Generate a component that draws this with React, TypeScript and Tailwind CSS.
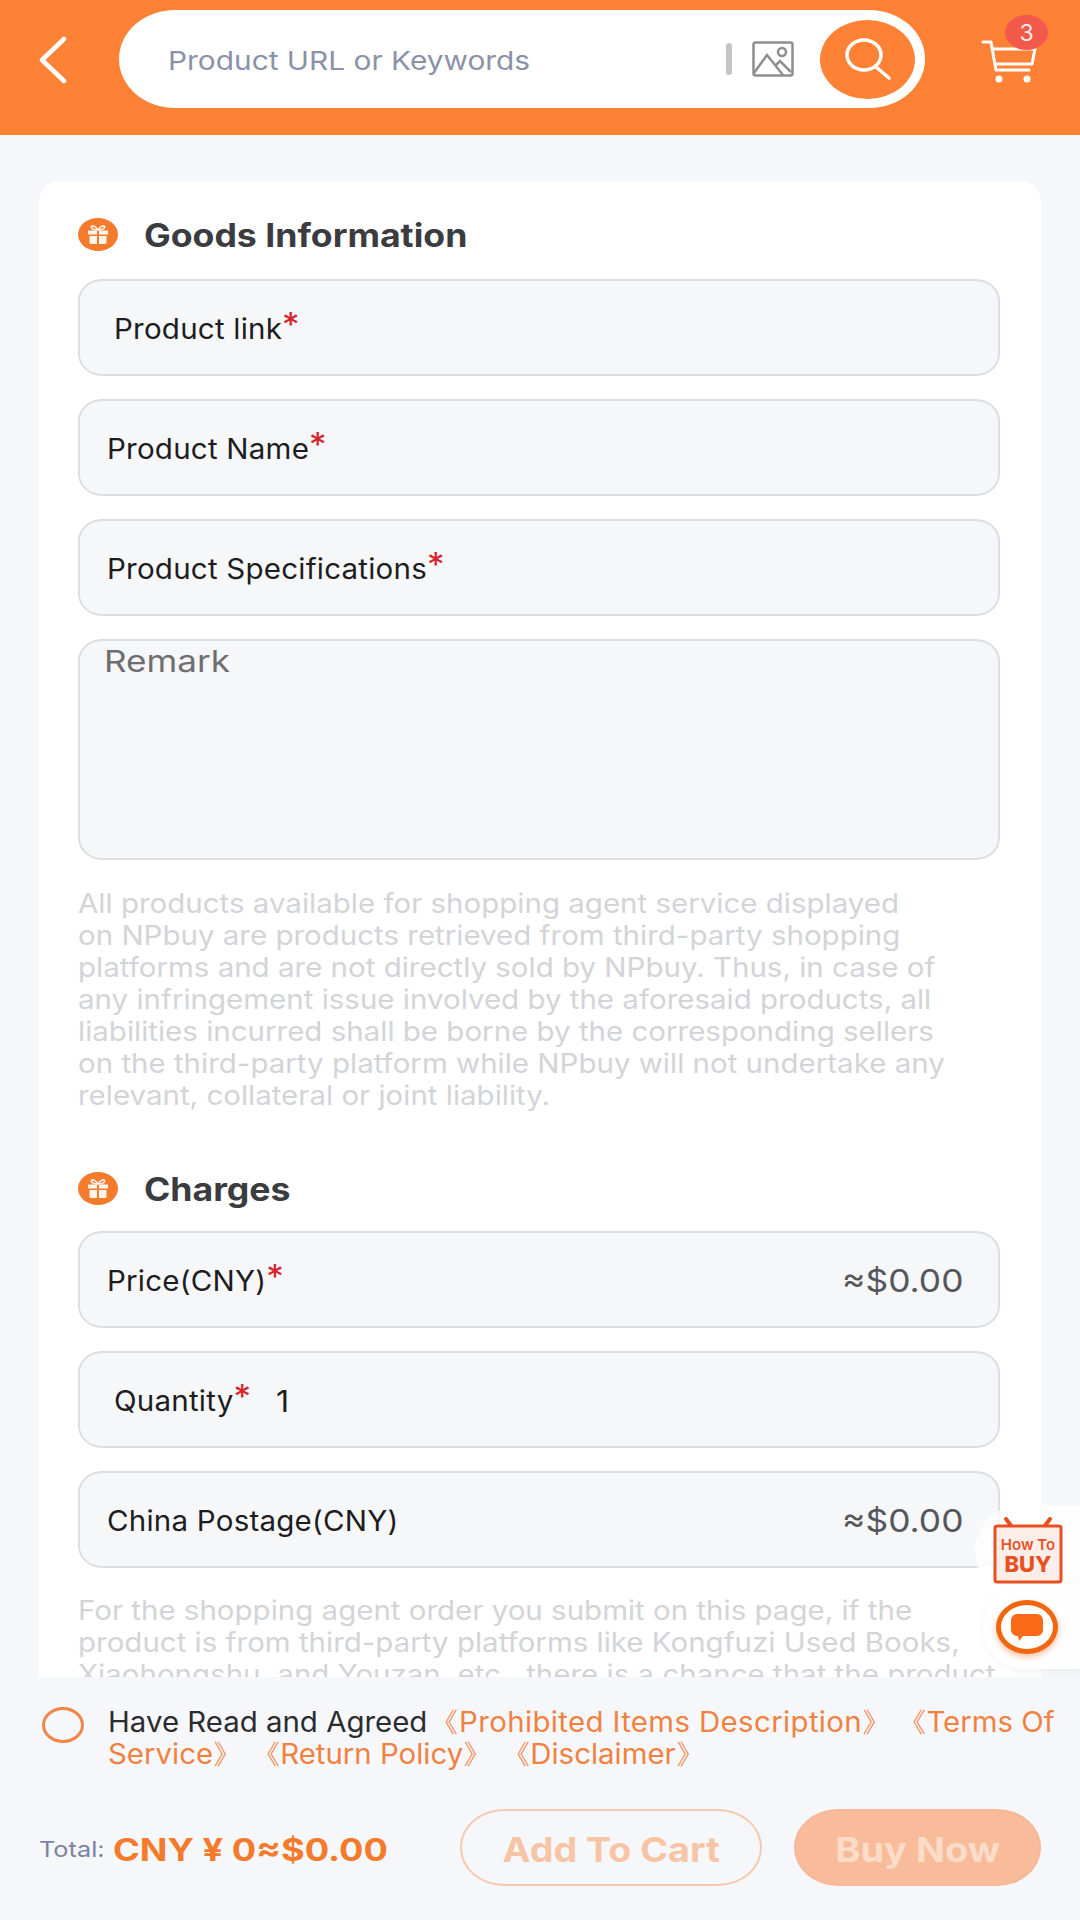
import React from 'react';

const FONT = 'font-["Inter","Noto_Sans",sans-serif]';

const GOODS_NOTE = [
  'All products available for shopping agent service displayed',
  'on NPbuy are products retrieved from third-party shopping',
  'platforms and are not directly sold by NPbuy. Thus, in case of',
  'any infringement issue involved by the aforesaid products, all',
  'liabilities incurred shall be borne by the corresponding sellers',
  'on the third-party platform while NPbuy will not undertake any',
  'relevant, collateral or joint liability.',
];

const CHARGES_NOTE = [
  'For the shopping agent order you submit on this page, if the',
  'product is from third-party platforms like Kongfuzi Used Books,',
  'Xiaohongshu, and Youzan, etc., there is a chance that the product',
  'may not be purchased.',
];

function GiftBadge() {
  return (
    <span className="flex h-[33px] w-[40px] shrink-0 items-center justify-center rounded-[50%] bg-[#f47a2c]">
      <svg width="22" height="20" viewBox="0 0 22 20" fill="#fff5ec">
        <path d="M1 5.500h9v4H1zM12 5.500h9v4h-9zM2.500 11h7.500v8H4a1.500 1.500 0 0 1-1.500-1.500zM12 11h7.500v6.500A1.500 1.500 0 0 1 18 19h-6z" />
        <path d="M11 5C9 1.500 5.500 0 4.500 1.500S6.500 5 11 5zm0 0c2-3.500 5.500-5 6.500-3.500S15.500 5 11 5z" fill="none" stroke="#fff5ec" strokeWidth="1.500" />
      </svg>
    </span>
  );
}

function SectionTitle({ title }: { title: string }) {
  return (
    <div className="flex h-[33px] items-center">
      <GiftBadge />
      <h2 className="ml-[26px] origin-left scale-x-[1.113] pt-[2px] text-[32px] leading-none font-bold text-[#3b3c3f]">{title}</h2>
    </div>
  );
}

interface FieldProps {
  label: string;
  required?: boolean;
  inset?: boolean;
  value?: string;
  amount?: boolean;
}

function Field({ label, required, inset, value, amount }: FieldProps) {
  return (
    <div className={`flex h-[97px] items-center rounded-[24px/22px] border-2 border-[#dddee1] bg-[#f6f7f9] pr-[35px] ${inset ? 'pl-[34px]' : 'pl-[27px]'}`}>
      <span className="origin-left scale-x-[1.055] pt-[2px] text-[28px] leading-none tracking-[0.2px] whitespace-nowrap text-[#1d1d1f]">
        {label}
        {required && <span className="relative top-[-3px] text-[33px] leading-[0] text-[#d9232b]">*</span>}
      </span>
      {value && <span className="ml-[32px] origin-left scale-x-[1.08] pt-[2px] text-[30px] leading-none text-[#1d1d1f]">{value}</span>}
      {amount && <span className="ml-auto origin-right scale-x-[1.14] pt-[2px] text-[31px] leading-none text-[#55565a]">≈$0.00</span>}
    </div>
  );
}

function Note({ lines }: { lines: string[] }) {
  return (
    <div className="origin-left scale-x-[1.092] text-[27px] leading-[32px] whitespace-nowrap text-[#d3d4d8]">
      {lines.map((line) => (
        <p key={line}>{line}</p>
      ))}
    </div>
  );
}

export default function App() {
  return (
    <div className={`relative flex h-[1920px] w-[1080px] flex-col overflow-hidden bg-[#f5f7fb] ${FONT}`}>
      <header className="relative flex h-[135px] shrink-0 items-start bg-[#fe8236] pt-[10px]">
        <svg className="ml-[38px] mt-[26px] shrink-0" width="30" height="48" viewBox="0 0 30 48" fill="none" stroke="#fff" strokeWidth="4.500" strokeLinecap="round" strokeLinejoin="round">
          <path d="M26 3 4 24l22 21" />
        </svg>
        <div className="ml-[51px] flex h-[98px] w-[806px] shrink-0 items-center rounded-[56px/49px] bg-white pl-[49px] pr-[10px]">
          <span className="flex-1 origin-left scale-x-[1.148] pt-[3px] text-[26px] leading-none text-[#8b92a8]">Product URL or Keywords</span>
          <span className="h-[32px] w-[6px] rounded-sm bg-[#c4c4c4]" />
          <svg className="ml-[20px]" width="42" height="36" viewBox="0 0 42 36" fill="none" stroke="#8e8e8e" strokeWidth="2.500">
            <rect x="1.500" y="1.500" width="39" height="33" rx="2" />
            <circle cx="30" cy="11" r="4" />
            <path d="M2 32 15 14l16 20M24 24l4-4 11 11" />
          </svg>
          <span className="ml-[26px] flex h-[79px] w-[95px] items-center justify-center rounded-[50%] bg-[#fe8236]">
            <svg width="50" height="44" viewBox="0 0 50 44" fill="none" stroke="#fff" strokeWidth="3.500" strokeLinecap="round">
              <ellipse cx="21" cy="18" rx="17" ry="15" />
              <path d="m33 30 13 11" />
            </svg>
          </span>
        </div>
        <svg className="ml-[56px] mt-[29px] shrink-0" width="56" height="44" viewBox="0 0 56 44" fill="none" stroke="#fff" strokeWidth="3" strokeLinecap="round" strokeLinejoin="round">
          <path d="M2 3h8l5 28h33" />
          <path d="M11 10h43l-3 15H14" />
          <circle cx="18" cy="40" r="2" fill="#fff" />
          <circle cx="46" cy="40" r="2" fill="#fff" />
        </svg>
        <span className="absolute left-[1005px] top-[15px] flex h-[35px] w-[43px] items-center justify-center rounded-[50%] bg-[#f2594b] pt-[2px] text-[23px] leading-none text-[#ffe9e4]">3</span>
      </header>

      <main className="min-h-0 flex-1 overflow-hidden px-[39px] pt-[46px]">
        <div className="rounded-[20px] bg-white pb-[40px] pl-[39px] pr-[41px] pt-[37px]">
          <SectionTitle title="Goods Information" />
          <div className="mt-[28px] flex flex-col gap-[23px]">
            <Field label="Product link" required inset />
            <Field label="Product Name" required />
            <Field label="Product Specifications" required />
            <div className="h-[221px] rounded-[24px/22px] border-2 border-[#dddee1] bg-[#f6f7f9] pl-[24px] text-[30px] leading-[40px] text-[#6e6e72]">
              <span className="block origin-left scale-x-[1.17]">Remark</span>
            </div>
          </div>
          <div className="mt-[28px]">
            <Note lines={GOODS_NOTE} />
          </div>
          <div className="mt-[60px]">
            <SectionTitle title="Charges" />
          </div>
          <div className="mt-[26px] flex flex-col gap-[23px]">
            <Field label="Price(CNY)" required amount />
            <Field label="Quantity" required inset value="1" />
            <Field label="China Postage(CNY)" amount />
          </div>
          <div className="mt-[27px]">
            <Note lines={CHARGES_NOTE} />
          </div>
        </div>
      </main>

      <footer className="h-[243px] shrink-0 px-[39px]">
        <div className="flex pt-[29px]">
          <span className="ml-[3px] mt-[1px] h-[36px] w-[42px] shrink-0 rounded-[50%] border-[3px] border-[#f0874a]" />
          <div className="ml-[24px] origin-left scale-x-[1.05] text-[28px] leading-[32px] whitespace-nowrap text-[#f0813f]">
            <p>
              <span className="text-[#2c2c2e]">Have Read and Agreed </span>
              <span className="-ml-[6px] tracking-[0.35px]">《Prohibited Items Description》</span>
              <span className="-ml-[3px]"> 《Terms Of</span>
            </p>
            <p>Service》 《Return Policy》 《Disclaimer》</p>
          </div>
        </div>
        <div className="mt-[39px] flex items-center">
          <span className="origin-left scale-x-[1.15] pt-[3px] text-[22px] leading-none text-[#7a84a0]">Total:</span>
          <span className="ml-[17px] origin-left scale-x-[1.17] pt-[3px] text-[31px] leading-none font-bold whitespace-nowrap text-[#f47a2c]">CNY ¥ 0≈$0.00</span>
          <span className="ml-auto flex h-[77px] w-[302px] items-center justify-center rounded-[44px/38px] border-2 border-[#f6c8ac] text-[#f7c5a5]">
            <span className="scale-x-[1.107] pt-[3px] text-[34px] font-bold">Add To Cart</span>
          </span>
          <span className="ml-[32px] flex h-[77px] w-[247px] items-center justify-center rounded-[44px/38px] border-2 border-[#f6b896] bg-[#f8bc9b] text-[#fbdcc8]">
            <span className="scale-x-[1.118] pt-[3px] text-[34px] font-bold">Buy Now</span>
          </span>
        </div>
      </footer>

      {/* floating helpers sit over the form */}
      <div className="absolute left-[975px] top-[1505px] flex h-[92px] w-[105px] items-center justify-center rounded-l-[50px] bg-white/80">
        <svg width="72" height="68" viewBox="0 0 72 68" fill="none">
          <path d="M20 10 14 2M52 10l6-8" stroke="#e8501f" strokeWidth="4" strokeLinecap="round" />
          <rect x="3" y="9" width="66" height="56" rx="2" fill="#fdeeea" stroke="#e8501f" strokeWidth="3" />
          <text x="36" y="33" textAnchor="middle" fontFamily="Inter" fontSize="15" fontWeight="600" fill="#e8501f">How To</text>
          <text x="36" y="55" textAnchor="middle" fontFamily="Inter" fontSize="22" fontWeight="800" fill="#e8501f">BUY</text>
        </svg>
      </div>
      <div className="absolute left-[983px] top-[1585px] flex h-[84px] w-[97px] items-center pl-[13px] rounded-l-[44px] bg-white/90 shadow-[0_2px_8px_rgba(0,0,0,0.05)]">
        <span className="flex h-[54px] w-[62px] items-center justify-center rounded-[50%] border-[5px] border-[#f2660f] bg-white shadow-[0_3px_6px_rgba(242,102,15,0.4)]">
          <svg width="34" height="30" viewBox="0 0 34 30" fill="#fb6a16">
            <path d="M7 2h20a6 6 0 0 1 6 6v10a6 6 0 0 1-6 6H13l-4 5-1-5H7a6 6 0 0 1-6-6V8a6 6 0 0 1 6-6z" />
          </svg>
        </span>
      </div>
    </div>
  );
}
